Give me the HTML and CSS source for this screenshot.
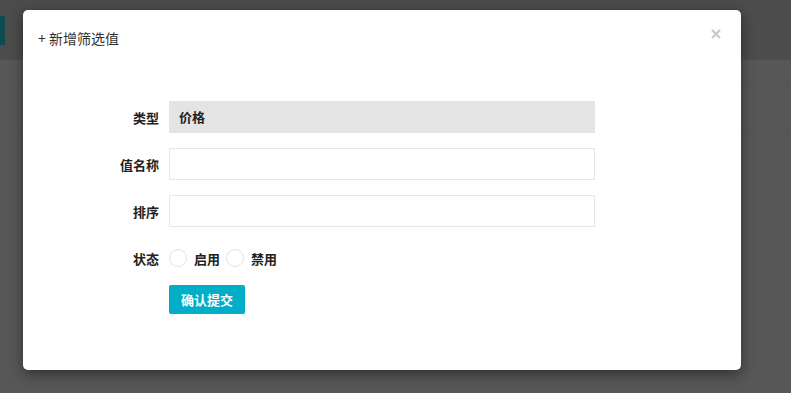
FILE: index.html
```html
<!DOCTYPE html>
<html lang="zh-CN">
<head>
    <meta charset="UTF-8">
    <meta name="viewport" content="width=device-width, initial-scale=1.0">
    <title>新增筛选值</title>
    <link rel="stylesheet" href="styles.css">
</head>
<body>

    <!-- 背后的页面 (被遮罩) -->
    <div class="page">
        <div class="topbar"><span class="topbar-btn"></span></div>
        <div class="row row-a"></div>
        <div class="row row-b"></div>
    </div>

    <!-- 弹窗 -->
    <div class="modal">
        <div class="modal-header">
            <span class="modal-title">+&nbsp;新增筛选值</span>
            <span class="modal-close">
                <svg width="10" height="10" viewBox="0 0 10 10">
                    <path d="M1 1 L9 9 M9 1 L1 9" stroke="#c9c9c9" stroke-width="2.4" fill="none"/>
                </svg>
            </span>
        </div>

        <form class="modal-form">
            <div class="form-row">
                <label>类型</label>
                <div class="field field-readonly">价格</div>
            </div>
            <div class="form-row">
                <label for="name">值名称</label>
                <input type="text" id="name" class="field">
            </div>
            <div class="form-row">
                <label for="sort">排序</label>
                <input type="text" id="sort" class="field">
            </div>
            <div class="form-row status-row">
                <label>状态</label>
                <div class="radios">
                    <span class="radio"></span><span class="radio-text">启用</span>
                    <span class="radio"></span><span class="radio-text">禁用</span>
                </div>
            </div>
            <div class="form-row submit-row">
                <label></label>
                <button type="button" class="btn-submit">确认提交</button>
            </div>
        </form>
    </div>

</body>
</html>
```

FILE: styles.css
```css
body {
    margin: 0;
    font-family: "Noto Sans CJK SC", "Noto Sans", sans-serif;
    background-color: #575757;
    height: 393px;
    overflow: hidden;
}
.page {
    height: 393px;
}
.topbar {
    height: 60px;
    background-color: #4c4c4c;
    border-bottom: 1px solid #505050;
    padding-top: 16px;
    box-sizing: border-box;
}
.topbar-btn {
    display: block;
    width: 5px;
    height: 29px;
    background-color: #0c4b50;
}
.row {
    border-bottom: 1px solid #545454;
}
.row-a {
    height: 20px;
}
.row-b {
    height: 54px;
}
.modal {
    position: absolute;
    left: 23px;
    top: 10px;
    width: 718px;
    height: 360px;
    background: #fff;
    border-radius: 5px;
    box-shadow: 0 4px 14px rgba(0, 0, 0, 0.45);
}
.modal-header {
    position: relative;
    padding: 15px 15px;
    height: 20px;
}
.modal-title {
    font-size: 14px;
    line-height: 20px;
    color: #333;
}
.modal-close {
    position: absolute;
    right: 20px;
    top: 19px;
    width: 10px;
    height: 10px;
    line-height: 0;
}
.modal-form {
    padding: 41px 0 0 36px;
}
.form-row {
    display: flex;
    align-items: center;
    gap: 10px;
    margin-bottom: 15px;
}
.form-row label {
    width: 100px;
    text-align: right;
    font-size: 13px;
    font-weight: bold;
    color: #222;
}
.field {
    width: 426px;
    height: 32px;
    box-sizing: border-box;
    border: 1px solid #e6e6e6;
    padding: 0 9px;
    font-size: 13px;
    font-family: inherit;
    margin: 0;
    outline: none;
}
.field-readonly {
    background-color: #e4e4e4;
    border-color: #e4e4e4;
    font-weight: bold;
    color: #222;
    line-height: 30px;
}
.status-row {
    height: 32px;
    margin-bottom: 11px;
}
.radios {
    display: flex;
    align-items: center;
}
.radio {
    width: 18px;
    height: 18px;
    box-sizing: border-box;
    border: 1px solid #e2e2e2;
    border-radius: 50%;
}
.radio-text {
    font-size: 13px;
    font-weight: bold;
    color: #222;
    margin: 0 6px 0 7px;
}
.btn-submit {
    width: 76px;
    height: 29px;
    border: none;
    border-radius: 2px;
    background-color: #00aec7;
    color: #fff;
    font-family: inherit;
    font-size: 13px;
    font-weight: bold;
    padding: 0;
    cursor: pointer;
}
```
